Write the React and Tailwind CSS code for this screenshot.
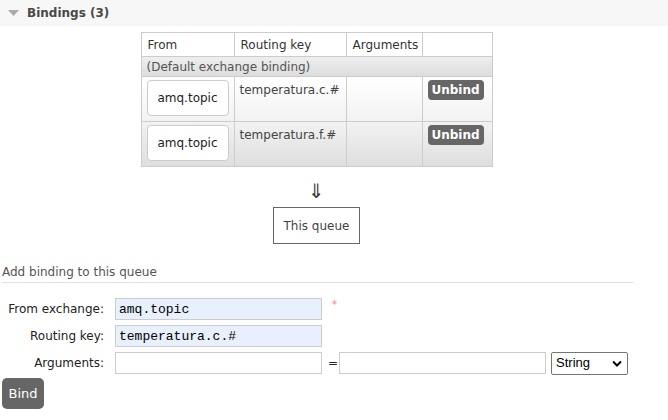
import React from "react";

const font = { fontFamily: '"DejaVu Sans", Verdana, sans-serif' };

const bindings = [
  { from: "amq.topic", key: "temperatura.c.#", bg: "bg-gradient-to-b from-white to-[#f2f2f2]" },
  { from: "amq.topic", key: "temperatura.f.#", bg: "bg-gradient-to-b from-[#f2f2f2] to-[#dedede]" },
];

const App = () => {
  return (
    <div className="w-[668px] h-[420px] bg-white text-[12px] text-[#444]" style={font}>
      {/* section header */}
      <div className="h-[26px] bg-[#f7f7f7] flex items-center pl-[8px]">
        <svg width="11" height="6" viewBox="0 0 11 6" className="mr-[8px]">
          <path d="M0 0 L11 0 L5.5 6 Z" fill="#aaa" />
        </svg>
        <span className="font-bold text-[12px] text-[#484848]">Bindings (3)</span>
      </div>

      <div className="w-[633px] flex flex-col items-center">
        <table className="mt-[6px] border-collapse border border-[#ccc] w-[352px] text-[#333]">
          <thead>
            <tr className="h-[24px] bg-white">
              <th className="border border-[#ccc] w-[93px] text-left font-normal pl-[6px]">From</th>
              <th className="border border-[#ccc] w-[112px] text-left font-normal pl-[6px]">Routing key</th>
              <th className="border border-[#ccc] w-[76px] text-left font-normal pl-[6px]">Arguments</th>
              <th className="border border-[#ccc]"></th>
            </tr>
          </thead>
          <tbody>
            <tr className="h-[20px] bg-gradient-to-b from-[#eeeeee] to-[#dcdcdc]">
              <td colSpan={4} className="border border-[#ccc] pl-[5px] text-[#555] leading-[18px]">
                (Default exchange binding)
              </td>
            </tr>
            {bindings.map((b, i) => (
              <tr key={i} className={`h-[45px] ${b.bg}`}>
                <td className="border border-[#ccc] px-[5px] py-[3px] align-top">
                  <div className="w-[82px] h-[36px] bg-white border border-[#ccc] rounded-[4px] flex items-center justify-center text-[#222]">
                    {b.from}
                  </div>
                </td>
                <td className="border border-[#ccc] pl-[5px] pt-[4px] align-top text-[#444]">{b.key}</td>
                <td className="border border-[#ccc]"></td>
                <td className="border border-[#ccc] align-top pl-[5px] pt-[3px]">
                  <button className="w-[56px] h-[20px] bg-[#666] text-white font-semibold rounded-[4px] text-[12px] leading-[20px]">
                    Unbind
                  </button>
                </td>
              </tr>
            ))}
          </tbody>
        </table>

        <div className="mt-[12px] text-[20px] leading-[24px] text-[#333]">⇓</div>
        <div className="mt-[4px] w-[87px] h-[37px] border border-[#666] flex items-center justify-center text-[#444]">
          This queue
        </div>
      </div>

      <div className="mt-[21px] ml-[2px] w-[631px] leading-[15px] pb-[2px] border-b border-[#e0e0e0] text-[#555]">
        Add binding to this queue
      </div>

      <div className="mt-[15px] flex flex-col gap-[5px]">
        <div className="flex items-center h-[22px]">
          <label className="w-[104px] text-right text-[#222]">From exchange:</label>
          <input
            readOnly
            value="amq.topic"
            className="ml-[11px] w-[207px] h-[22px] bg-[#e8f0fe] border border-[#ccc] px-[3px] text-[13px] text-black outline-none"
            style={{ fontFamily: '"Liberation Mono", monospace' }}
          />
          <span className="ml-[10px] -mt-[10px] text-[10px] text-[#f77]">*</span>
        </div>
        <div className="flex items-center h-[22px]">
          <label className="w-[104px] text-right text-[#222]">Routing key:</label>
          <input
            readOnly
            value="temperatura.c.#"
            className="ml-[11px] w-[207px] h-[22px] bg-[#e8f0fe] border border-[#ccc] px-[3px] text-[13px] text-black outline-none"
            style={{ fontFamily: '"Liberation Mono", monospace' }}
          />
        </div>
        <div className="flex items-center h-[22px]">
          <label className="w-[104px] text-right text-[#222]">Arguments:</label>
          <input className="ml-[11px] w-[207px] h-[22px] bg-white border border-[#ccc] outline-none" />
          <span className="ml-[6px] text-[#222]">=</span>
          <input className="ml-[1px] w-[207px] h-[22px] bg-white border border-[#ccc] outline-none" />
          <div
            className="ml-[5px] w-[77px] h-[23px] border border-[#767676] rounded-[2px] flex items-center justify-between pl-[4px] pr-[5px] text-[13px] text-black"
            style={{ fontFamily: '"Liberation Sans", Arial, sans-serif' }}
          >
            <span>String</span>
            <svg width="10" height="7" viewBox="0 0 10 7">
              <path d="M1 1.5 L5 5.5 L9 1.5" stroke="#000" strokeWidth="2" fill="none" />
            </svg>
          </div>
        </div>
      </div>

      <button className="mt-[4px] ml-[2px] w-[42px] h-[31px] bg-[#666] text-white rounded-[5px] text-[13px]">
        Bind
      </button>
    </div>
  );
};

export default App;
